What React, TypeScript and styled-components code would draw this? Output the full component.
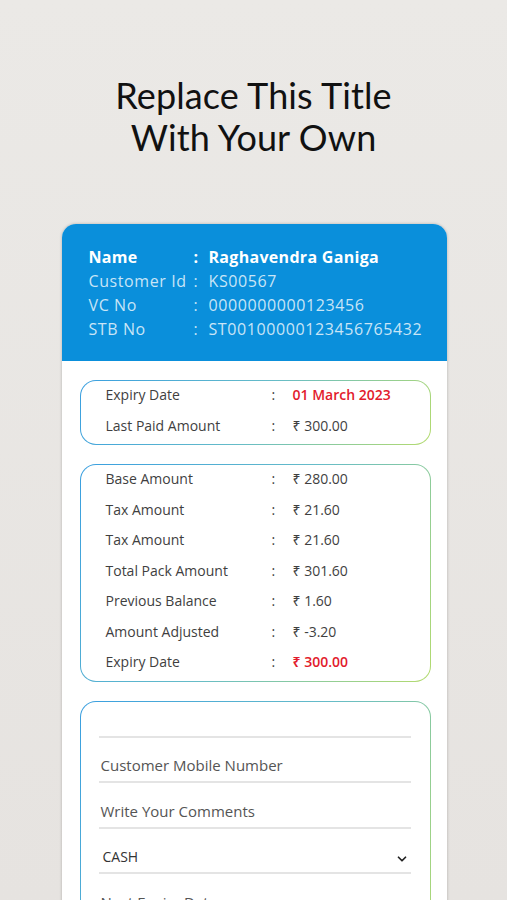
import React from "react";
import styled, { createGlobalStyle } from "styled-components";
import { ChevronDown } from "lucide-react";

const GlobalStyle = createGlobalStyle`
  html, body {
    margin: 0;
    padding: 0;
    height: 900px;
    overflow: hidden;
  }
  body {
    background: linear-gradient(180deg, #ebe9e6 0%, #e6e3e0 100%);
    font-family: "Open Sans", "Noto Sans", sans-serif;
  }
`;

type Row = {
  label: string;
  value: string;
  highlight?: boolean;
};

const headerRows: Row[] = [
  { label: "Name", value: "Raghavendra Ganiga", highlight: true },
  { label: "Customer Id", value: "KS00567" },
  { label: "VC No", value: "0000000000123456" },
  { label: "STB No", value: "ST00100000123456765432" },
];

const expiryRows: Row[] = [
  { label: "Expiry Date", value: "01 March 2023", highlight: true },
  { label: "Last Paid Amount", value: "₹ 300.00" },
];

const amountRows: Row[] = [
  { label: "Base Amount", value: "₹ 280.00" },
  { label: "Tax Amount", value: "₹ 21.60" },
  { label: "Tax Amount", value: "₹ 21.60" },
  { label: "Total Pack Amount", value: "₹ 301.60" },
  { label: "Previous Balance", value: "₹ 1.60" },
  { label: "Amount Adjusted", value: "₹ -3.20" },
  { label: "Expiry Date", value: "₹ 300.00", highlight: true },
];

const Page = styled.div`
  display: flex;
  flex-direction: column;
  align-items: center;
  padding-top: 74px;
`;

const Title = styled.h1`
  margin: 0;
  font-family: "Lato", "Noto Sans", sans-serif;
  font-weight: 400;
  font-size: 36px;
  line-height: 42px;
  color: #111;
  text-align: center;
  letter-spacing: 0.1px;
`;

const Card = styled.div`
  margin-top: 66px;
  width: 385px;
  margin-left: 1px;
  border-radius: 14px;
  overflow: hidden;
  background: #fff;
  box-shadow: 0 0 3px rgba(0, 0, 0, 0.25);
`;

const Header = styled.div`
  background: #0a8fdb;
  padding: 21px 10px 20px 27px;
  display: grid;
  grid-template-columns: 105px 15px auto;
  grid-auto-rows: 24px;
  align-items: center;
`;

const HeaderCell = styled.div<{ $bold?: boolean }>`
  font-size: 16px;
  color: ${(p) => (p.$bold ? "#ffffff" : "rgba(255,255,255,0.78)")};
  font-weight: ${(p) => (p.$bold ? 700 : 400)};
  white-space: nowrap;
  letter-spacing: ${(p) => (p.$bold ? "0.3px" : "0.6px")};
`;

const Body = styled.div`
  display: flex;
  flex-direction: column;
  gap: 19px;
  padding: 19px 16px 0 18px;
`;

const GradientBox = styled.div`
  border: 1.5px solid transparent;
  border-radius: 16px;
  background:
    linear-gradient(#fff, #fff) padding-box,
    linear-gradient(120deg, #3a9fe0 0%, #66bcc8 50%, #b4db6e 100%) border-box;
`;

const InfoList = styled(GradientBox)`
  padding: 0 0 2px 25px;
  display: grid;
  grid-template-columns: 166px 21px auto;
  grid-auto-rows: 30.5px;
  align-items: center;
`;

const InfoCell = styled.div<{ $red?: boolean }>`
  font-size: 14px;
  padding-bottom: 3px;
  color: ${(p) => (p.$red ? "#e21b2c" : "#3f3f3f")};
  font-weight: ${(p) => (p.$red ? 600 : 400)};
  white-space: nowrap;
`;

const FormBox = styled(GradientBox)`
  border-bottom: none;
  border-bottom-left-radius: 0;
  border-bottom-right-radius: 0;
  padding: 34px 19px 40px 18px;
  display: flex;
  flex-direction: column;
`;

const Field = styled.div`
  display: flex;
  align-items: flex-end;
  justify-content: space-between;
  height: 45.5px;
  padding: 0 2px 6px 2px;
  border-top: 2px solid #e4e4e4;
  box-sizing: border-box;
  font-size: 15px;
  color: #555;
`;

const SelectText = styled.span`
  color: #333;
  font-size: 14px;
  padding-left: 2px;
`;

function InfoRows({ rows }: { rows: Row[] }) {
  return (
    <InfoList>
      {rows.map((r, i) => (
        <React.Fragment key={i}>
          <InfoCell>{r.label}</InfoCell>
          <InfoCell>:</InfoCell>
          <InfoCell $red={r.highlight}>{r.value}</InfoCell>
        </React.Fragment>
      ))}
    </InfoList>
  );
}

export default function App() {
  return (
    <>
      <GlobalStyle />
      <Page>
        <Title>
          Replace This Title
          <br />
          With Your Own
        </Title>
        <Card>
          <Header>
            {headerRows.map((r, i) => (
              <React.Fragment key={i}>
                <HeaderCell $bold={r.highlight}>{r.label}</HeaderCell>
                <HeaderCell $bold={r.highlight}>:</HeaderCell>
                <HeaderCell $bold={r.highlight}>{r.value}</HeaderCell>
              </React.Fragment>
            ))}
          </Header>
          <Body>
            <InfoRows rows={expiryRows} />
            <InfoRows rows={amountRows} />
            <FormBox>
              <Field>Customer Mobile Number</Field>
              <Field>Write Your Comments</Field>
              <Field>
                <SelectText>CASH</SelectText>
                <ChevronDown size={14} strokeWidth={3} color="#222" />
              </Field>
              <Field>Next Expiry Date</Field>
            </FormBox>
          </Body>
        </Card>
      </Page>
    </>
  );
}
